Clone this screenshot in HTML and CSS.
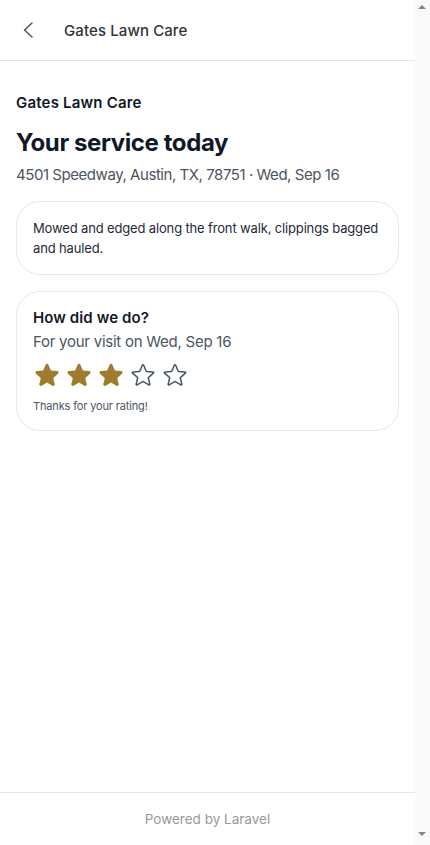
FILE: index.html
```html
<!DOCTYPE html>
<html lang="en">
<head>
<meta charset="utf-8">
<meta name="viewport" content="width=device-width, initial-scale=1">
<title>Gates Lawn Care</title>
<link rel="stylesheet" href="styles.css">
</head>
<body>
<div class="frame">
<div class="page">
  <header class="topbar">
    <a class="back" href="#" aria-label="Back">
      <svg viewBox="0 0 24 24" width="24" height="24" fill="none" stroke="currentColor" stroke-width="1.5" stroke-linecap="round" stroke-linejoin="round"><path d="M16 5 8.5 12l7.5 7"/></svg>
    </a>
    <span class="topbar-title">Gates Lawn Care</span>
  </header>
  <main class="main">
    <p class="company">Gates Lawn Care</p>
    <h1 class="title">Your service today</h1>
    <p class="meta">4501 Speedway, Austin, TX, 78751 · Wed, Sep 16</p>
    <section class="card">
      <p class="note">Mowed and edged along the front walk, clippings bagged and hauled.</p>
    </section>
    <section class="card">
      <h2 class="card-title">How did we do?</h2>
      <p class="card-sub">For your visit on Wed, Sep 16</p>
      <div class="stars">
        <svg class="star filled" viewBox="0 0 24 24" width="28" height="28"><path fill="currentColor" fill-rule="evenodd" d="M10.788 3.21c.448-1.077 1.976-1.077 2.424 0l2.082 5.006 5.404.434c1.164.093 1.636 1.545.749 2.305l-4.117 3.527 1.257 5.273c.271 1.136-.964 2.033-1.96 1.425L12 18.354 7.373 21.18c-.996.608-2.231-.29-1.96-1.425l1.257-5.273-4.117-3.527c-.887-.76-.415-2.212.749-2.305l5.404-.434 2.082-5.005Z"/></svg>
        <svg class="star filled" viewBox="0 0 24 24" width="28" height="28"><path fill="currentColor" fill-rule="evenodd" d="M10.788 3.21c.448-1.077 1.976-1.077 2.424 0l2.082 5.006 5.404.434c1.164.093 1.636 1.545.749 2.305l-4.117 3.527 1.257 5.273c.271 1.136-.964 2.033-1.96 1.425L12 18.354 7.373 21.18c-.996.608-2.231-.29-1.96-1.425l1.257-5.273-4.117-3.527c-.887-.76-.415-2.212.749-2.305l5.404-.434 2.082-5.005Z"/></svg>
        <svg class="star filled" viewBox="0 0 24 24" width="28" height="28"><path fill="currentColor" fill-rule="evenodd" d="M10.788 3.21c.448-1.077 1.976-1.077 2.424 0l2.082 5.006 5.404.434c1.164.093 1.636 1.545.749 2.305l-4.117 3.527 1.257 5.273c.271 1.136-.964 2.033-1.96 1.425L12 18.354 7.373 21.18c-.996.608-2.231-.29-1.96-1.425l1.257-5.273-4.117-3.527c-.887-.76-.415-2.212.749-2.305l5.404-.434 2.082-5.005Z"/></svg>
        <svg class="star empty" viewBox="0 0 24 24" width="28" height="28" fill="none" stroke="currentColor" stroke-width="1.3" stroke-linejoin="round"><path d="M11.48 3.499a.562.562 0 0 1 1.04 0l2.125 5.111a.563.563 0 0 0 .475.345l5.518.442c.499.04.701.663.321.988l-4.204 3.602a.563.563 0 0 0-.182.557l1.285 5.385a.562.562 0 0 1-.84.61l-4.725-2.885a.562.562 0 0 0-.586 0L6.982 20.54a.562.562 0 0 1-.84-.61l1.285-5.386a.562.562 0 0 0-.182-.557l-4.204-3.602a.562.562 0 0 1 .321-.988l5.518-.442a.563.563 0 0 0 .475-.345L11.48 3.5Z"/></svg>
        <svg class="star empty" viewBox="0 0 24 24" width="28" height="28" fill="none" stroke="currentColor" stroke-width="1.3" stroke-linejoin="round"><path d="M11.48 3.499a.562.562 0 0 1 1.04 0l2.125 5.111a.563.563 0 0 0 .475.345l5.518.442c.499.04.701.663.321.988l-4.204 3.602a.563.563 0 0 0-.182.557l1.285 5.385a.562.562 0 0 1-.84.61l-4.725-2.885a.562.562 0 0 0-.586 0L6.982 20.54a.562.562 0 0 1-.84-.61l1.285-5.386a.562.562 0 0 0-.182-.557l-4.204-3.602a.562.562 0 0 1 .321-.988l5.518-.442a.563.563 0 0 0 .475-.345L11.48 3.5Z"/></svg>
      </div>
      <p class="thanks">Thanks for your rating!</p>
    </section>
  </main>
  <footer class="footer">Powered by Laravel</footer>
</div>
<div class="scrollbar" aria-hidden="true">
  <span class="arrow-up"></span>
  <span class="arrow-down"></span>
</div>
</div>
</body>
</html>
```
FILE: styles.css
```css
* {
  box-sizing: border-box;
}
body {
  margin: 0;
  background: #ffffff;
  font-family: Inter, "Noto Sans", "Liberation Sans", sans-serif;
  color: #111827;
}
p, h1, h2 {
  margin: 0;
}
.frame {
  display: flex;
  min-height: 100vh;
}
.page {
  flex: 1;
  min-width: 0;
  min-height: 100vh;
  display: flex;
  flex-direction: column;
}
.scrollbar {
  flex: 0 0 15px;
  height: 100vh;
  position: sticky;
  top: 0;
  background: #f9f9f9;
  display: flex;
  flex-direction: column;
  justify-content: space-between;
  align-items: flex-start;
  padding: 5px 0 9px 3px;
}
.arrow-up {
  width: 0;
  height: 0;
  border-left: 4px solid transparent;
  border-right: 4px solid transparent;
  border-bottom: 4px solid #858585;
}
.arrow-down {
  width: 0;
  height: 0;
  border-left: 4px solid transparent;
  border-right: 4px solid transparent;
  border-top: 4px solid #858585;
}
.topbar {
  height: 61px;
  display: flex;
  align-items: center;
  gap: 24px;
  padding: 0 16px;
  border-bottom: 1px solid #e5e5e5;
}
.back {
  display: flex;
  align-items: center;
  color: #4b5563;
}
.back svg {
  display: block;
}
.topbar-title {
  font-size: 15px;
  font-weight: 500;
  color: #333333;
  letter-spacing: 0.1px;
}
.main {
  flex: 1;
  display: flex;
  flex-direction: column;
  padding: 32px 16px;
}
.company {
  font-size: 15px;
  line-height: 20px;
  font-weight: 600;
  letter-spacing: 0.2px;
}
.title {
  margin-top: 16px;
  font-size: 24px;
  line-height: 28px;
  font-weight: 700;
  letter-spacing: -0.4px;
}
.meta {
  margin-top: 8px;
  font-size: 15px;
  line-height: 20px;
  color: #4b5563;
  letter-spacing: -0.45px;
}
.card {
  margin-top: 16px;
  border: 1px solid #e5e7eb;
  border-radius: 24px;
  padding: 16px;
}
.note {
  font-size: 13px;
  line-height: 20px;
  color: #1f2937;
  letter-spacing: -0.15px;
}
.card-title {
  font-size: 15px;
  line-height: 20px;
  font-weight: 600;
  letter-spacing: 0.1px;
}
.card-sub {
  margin-top: 4px;
  font-size: 15px;
  line-height: 20px;
  color: #4b5563;
  letter-spacing: -0.25px;
}
.stars {
  margin-top: 9px;
  display: flex;
  gap: 4px;
}
.star {
  display: block;
}
.star.filled {
  color: #a07b2c;
}
.star.empty {
  color: #4b5563;
}
.thanks {
  margin-top: 9px;
  font-size: 11px;
  line-height: 16px;
  color: #4b5563;
  letter-spacing: -0.15px;
}
.footer {
  border-top: 1px solid #e5e5e5;
  padding: 16px;
  text-align: center;
  font-size: 13.5px;
  line-height: 20px;
  color: #999999;
}
```
